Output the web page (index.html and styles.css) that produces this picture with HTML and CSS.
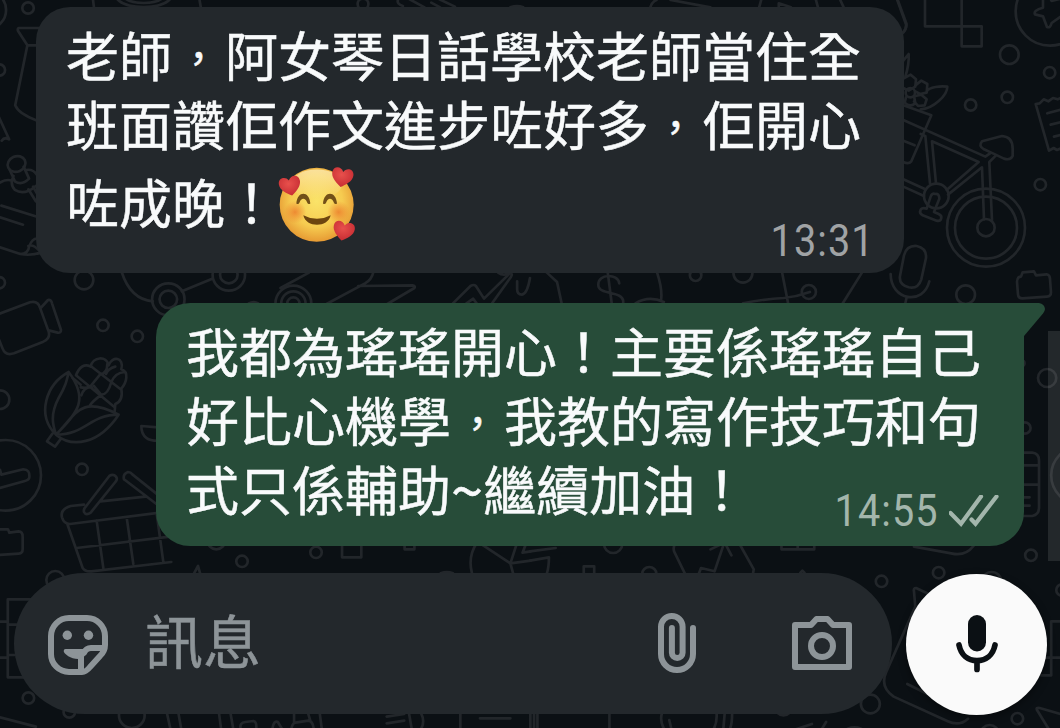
FILE: index.html
```
<!DOCTYPE html>
<html lang="zh-HK">
<head>
  <meta charset="UTF-8" />
  <meta name="viewport" content="width=device-width, initial-scale=1" />
  <title>訊息</title>
  <link rel="stylesheet" href="styles.css">
</head>
<body>
  <svg class="wallpaper" viewBox="0 0 1060 728" aria-hidden="true">
    <!-- top left: vase, pushpin, book -->
    <g transform="scale(.338 .3333)">
      <circle cx="83" cy="24" r="17"/>
      <circle cx="-40" cy="30" r="58"/>
      <path d="M118 84H56q-6 2-2 10l27 42h30M81 136L45 316q10 26 65 46"/>
      <circle cx="-2" cy="210" r="17"/>
      <path d="M-4 350L27 418q-14-8-22 4"/>
      <ellipse cx="49" cy="492" rx="27" ry="23" transform="rotate(-25 49 492)"/>
      <path d="M28 508l16 36q20 14 42-8l-16-36M40 528q-12 24 4 42 28 18 62-12M77 510q20-4 32 14M84 568l22 36M98 560l12 22M0 548q20-12 34-6M4 617l108 34M0 652l68 22M0 742l60 20q24 0 26-22 10-28 28-24M60 762q30 6 62-4M84 738q14-6 30 12"/>
      <path d="M275-2l3 24M590-2l4 24M345-5q20 26 80 26t80-26M370-5q18 14 55 14t55-14"/>
      <circle cx="1074" cy="12" r="16"/>
      <path d="M1178-2q-6 14 14 20M1212-2l44 24M1276 8l26 14M1300-2l46 22M1510 22q20-8 38 0"/>
    </g>
    <!-- top edge and strip under the first bubble -->
    <g transform="translate(530 0) scale(.338 .3333)">
      <path d="M356 22q4-16 18-22M416 0l118 22M678 22l6-22M846 0l6 22M736 10v12M736 10l36 12M918 0l10 22M1088 0l26 72q0 14-10 26"/>
      <path d="M50 818l30 28 14 66M376 818q16 50 12 80M264 850c-4-30-62-30-62 4 0 34 74 16 74 52q0 14-14 16M230 818l12 94M312 910q40-24 84-4M630 910q70-14 120-16 40-4 78-18M746 818l18 94M982 818l-58 94"/>
      <circle cx="490" cy="826" r="17"/>
      <circle cx="630" cy="820" r="28"/>
      <circle cx="825" cy="876" r="21"/>
    </g>
    <!-- right side: flower basket bike, badge, receipt, microphone -->
    <g transform="translate(890 0) scale(.3333)">
      <path d="M20-5l28 78q2 16-10 26M105-5v84h170v60h-60V-5"/>
      <circle cx="480" cy="34" r="103"/>
      <path d="M515-5l-30 8-6-12h-20v32q-30 8-24 20l24 6 12 32q10 4 14-12l25-18"/>
      <circle cx="358" cy="164" r="28"/>
      <circle cx="479" cy="218" r="17"/>
      <circle cx="352" cy="292" r="17"/>
      <circle cx="242" cy="315" r="17"/>
      <circle cx="451" cy="554" r="17"/>
      <path d="M515 292l-12 6-14-4-14 10-14-6-12 12-12 2 40 140 14-8 10 6 14-6M472 340l43-12M482 374l33-8M492 410l23-6"/>
      <path d="M40 182l16-20q2 30-10 68M40 236l22-12 16 14-2 22-20 12-16-8M76 256l18-14 18 10-2 26-20 4-14-8M48 292l-4 16q16 16 32 2l-4-22M76 288l18-4 16 14-6 18-20 2-12-14M110 274c8-14 42-16 62-14 0 26-42 66-80 68"/>
      <circle cx="61" cy="278" r="14"/>
      <path d="M40 316l84 30-60 138q-8 10-24 2M40 360l246 110 14-10M40 422l34 14M126 424l140 62-96 84M126 424l12 126M106 408l14 142M92 402l10 4M174 584l102-82 6 156M298 486l8 174M298 486l20-20M40 538l66 30M40 560l62 28"/>
      <path d="M276 424l60-16q32 2 32 38v22q-6 14-26 8l-38-18-22-10q-18-10-6-24z"/>
      <circle cx="139" cy="588" r="37"/>
      <path d="M122 590l-12 36c-20-6-26 12-12 20l42 16c14 4 20-14 6-20l-14-6 16-40q0-16-12-14-10-4-14 8z"/>
      <circle cx="288" cy="683" r="117"/>
      <circle cx="288" cy="683" r="93"/>
      <circle cx="288" cy="683" r="26"/>
      <path d="M42 766q8-30 38-28 30 6 28 36l-14 64q-10 30-38 24-30-8-26-34zM2 822c0 80 98 96 116 22M50 892l-4 18"/>
      <circle cx="227" cy="884" r="28"/>
      <path d="M398 817l34-3 6 12 32-3q10 2 10 14l3 40q0 12-12 13l-74 5q-12 0-13-12l-3-38q0-14 12-15z"/>
    </g>
    <!-- left side: camera, corn, shopping basket -->
    <g transform="translate(0 280) scale(.3333)">
      <circle cx="-2" cy="8" r="17"/>
      <circle cx="252" cy="0" r="28"/>
      <path d="M-4 102l94-35q24-6 30 16l26 72q6 20-16 30L42 220q-26 8-34-14l-12-30M122 84l22-24q10-2 12 10l27 80q0 10-10 8l-24-6"/>
      <circle cx="309" cy="136" r="17"/>
      <circle cx="412" cy="169" r="17"/>
      <circle cx="0" cy="359" r="28"/>
      <path d="M168 464c-60-60-30-150 38-188 60 80 30 120-38 188-10-30-18-60 8-110 20-34 24-50 30-78M168 464c60-60 70-120 188-60-60 90-140 100-188 60 90 0 100-60 188-60M158 460l-17 24 24 16 18-24"/>
      <path d="M228 286c10-26 26-36 44-26 6-30 48-34 54-4 10-30 48-24 38 12 24 8 16 40 0 58 4 24-2 40-18 46l-2 22M228 286l116 96M272 258l90 70M218 294l24 20M242 322q20 4 30-4l28-34q22-4 22-32M244 346q10-28 32-24M270 376q8-12 34-32 20 0 30-38 12-28 40-30M300 340l-18-22M318 282q6-16 28-22"/>
      <circle cx="17" cy="586" r="106"/>
      <path d="M0 570l4 14 66-16q20 0 18 24 0 8-16 12L0 624M-4 748h28l4 10 28-4q12 0 12 16v38q0 12-12 13l-60 4"/>
      <circle cx="246" cy="568" r="17"/>
      <path d="M328 588q12-8 20 2 6 8-2 16l-74 92q-14 10-20-2-2-8 4-14zM372 598q-4-16 12-22 8 0 14 8l90 72M372 598l110 84M474 442l-50-4c0 34 22 46 54 44M252 674l-40 4q-32 10-26 34 6 20 24 20l270-34M302 664l134-14M202 732l46 132q8 12 26 10l240-28M230 804l280-34M290 722l20 142M380 712l20 140M470 700l20 146"/>
      <circle cx="166" cy="900" r="27"/>
    </g>
    <!-- between the bubbles -->
    <g transform="translate(0 260) scale(.338 .3333)">
      <path d="M360 36q26 82 92 88M538 94l90-38M914 38l-84 46M1104 38q-4 20-24 32l-114 62M1060 78l160-2q10 2 6 8l-80 48M1340 130l52-52q10-6 16 0l24 38 76-76q10 0 4 10l-56 80M1380 130l20-14 10 14M1530 64v24q0 16 14 16 16-2 24-50"/>
      <circle cx="498" cy="118" r="48"/>
      <circle cx="498" cy="118" r="26"/>
      <circle cx="677" cy="44" r="48"/>
      <circle cx="677" cy="44" r="26"/>
      <circle cx="868" cy="130" r="53"/>
      <circle cx="868" cy="130" r="36"/>
      <circle cx="868" cy="130" r="18"/>
      <path d="M736 130q14-8 28 0M1474 38q16 12 36 0"/>
    </g>
    <!-- right of the second bubble -->
    <g transform="translate(530 290) scale(.338 .3333)">
      <circle cx="1530" cy="264" r="27"/>
      <circle cx="1464" cy="414" r="17"/>
      <path d="M1440 488h46q20 2 20 24v140q0 22-20 26h-46M1460 526h46M1460 584h46M1460 622h18M1460 647h18"/>
      <circle cx="1630" cy="556" r="88"/>
      <circle cx="1455" cy="220" r="8"/>
      <circle cx="1482" cy="796" r="17"/>
    </g>
    <!-- around the input bar, left half -->
    <g transform="translate(0 540) scale(.338 .3333)">
      <circle cx="640" cy="2" r="26"/>
      <circle cx="716" cy="64" r="17"/>
      <circle cx="935" cy="37" r="17"/>
      <path d="M574 100l12-22 6 22M1012 10v42h57V10M1197 10v18h29V10M1410 10q-26 40-14 88M1426 14l84 56 60-8M1510 70l18-56M1510 70l8 30M1556 12l-10 26 24-4M1304 100q18-8 36 0M100 178H23v234h60M0 245h22M23 254h34M0 353h22M23 345h20M0 532l106 28"/>
      <circle cx="84" cy="474" r="17"/>
      <circle cx="205" cy="516" r="17"/>
      <circle cx="390" cy="526" r="38"/>
      <path d="M494 520l10 46M528 520l8 46M648 520l6 46M682 520l8 46M712 566q-4-18 14-20l24-3q10 2 8 23M806 566q4-26 16-20l12 20M862 566q4-18 12-18l38-6q14 2 16 24M870 546v-24M912 522l6 20M946 520l6 46M1144 530l52-8M1144 550l52-8M1210 520l8 46M1246 520q12 24 0 46M1362 520v46M1420 535h90"/>
    </g>
    <!-- around the input bar, right half -->
    <g transform="translate(530 540) scale(.338 .3333)">
      <path d="M0 34l76-10M0 62l56-10q0 30-6 48M159 100V79h31v21M428 14q-6 12 0 24l30 62M428 14l6-4M620 12l42 76-2 12M534 28l42-20 20 38M572 16l-26 78-40-10-6 16M744 14v14h97V14M792 14v12M800 98l6-6 6 6M1136 20l110 20q42 10 66-22"/>
      <circle cx="246" cy="12" r="27"/>
      <circle cx="353" cy="102" r="21"/>
      <circle cx="1040" cy="124" r="17"/>
      <circle cx="1209" cy="98" r="17"/>
      <circle cx="1366" cy="124" r="28"/>
      <circle cx="1574" cy="150" r="17"/>
      <path d="M1180 162l-38-18q-8 0-6 10l4 46-86 196q-20 44 22 74l160 74q34 16 60-8M1116 432l60 30M1570 244h-28v162h-30M1520 353h50M1500 510q-4-8 8-6l62 18M1500 510l34 56M1 520v46M12 520v46M22 520v46M235 520v46M390 520q-6 24 6 46M412 540l6 26M552 520q2 26-8 46M576 520l-4 46M598 520q0 30-6 46M768 574l66-22M864 566l12-20M940 566q20-8 40 0"/>
      <circle cx="750" cy="502" r="24"/>
      <circle cx="1007" cy="492" r="28"/>
      <circle cx="1442" cy="536" r="17"/>
      <circle cx="1360" cy="582" r="27"/>
    </g>
  </svg>

  <main class="chat">
    <article class="bubble received">
      <p>老師<span class="comma">，</span>阿女琴日話學校老師當住全<br>班面讚佢作文進步咗好多<span class="comma">，</span>佢開心<br>咗成晚！<svg class="emoji" viewBox="38 34 234 230" role="img" aria-label="🥰">
        <defs>
          <radialGradient id="face" cx=".5" cy=".45" r=".58">
            <stop offset="0" stop-color="#fae369"/>
            <stop offset=".6" stop-color="#f6cb50"/>
            <stop offset="1" stop-color="#e4932f"/>
          </radialGradient>
          <linearGradient id="shine" x1="0" y1="0" x2="0" y2="1">
            <stop offset="0" stop-color="#fff3c0" stop-opacity=".7"/>
            <stop offset="1" stop-color="#fff3c0" stop-opacity="0"/>
          </linearGradient>
          <radialGradient id="cheek">
            <stop offset="0" stop-color="#ec7f2d" stop-opacity=".85"/>
            <stop offset="1" stop-color="#ec7f2d" stop-opacity="0"/>
          </radialGradient>
          <radialGradient id="red" cx=".45" cy=".35" r=".7">
            <stop offset="0" stop-color="#e8504c"/>
            <stop offset="1" stop-color="#c42a31"/>
          </radialGradient>
          <path id="heart" d="M0 31C-14 21-33 8-32-10C-31-29-8-31 0-15C8-31 31-29 32-10C33 8 14 21 0 31Z"/>
        </defs>
        <circle cx="154" cy="150" r="111" fill="url(#face)"/>
        <ellipse cx="154" cy="88" rx="76" ry="44" fill="url(#shine)"/>
        <circle cx="89" cy="172" r="34" fill="url(#cheek)"/>
        <circle cx="220" cy="172" r="34" fill="url(#cheek)"/>
        <path d="M93 146C96 107 132 107 135 146Q129 151 125 142C121 128 107 128 103 142Q99 151 93 146ZM173 146C176 107 212 107 215 146Q209 151 205 142C201 128 187 128 183 142Q179 151 173 146Z" fill="#725018"/>
        <path d="M114 181Q155 203 196 181C188 219 122 219 114 181Z" fill="#6d450f"/>
        <use href="#heart" transform="translate(74 92) rotate(-12)" fill="url(#red)"/>
        <use href="#heart" transform="translate(231 66) rotate(10)" fill="url(#red)"/>
        <use href="#heart" transform="translate(235 227) rotate(12)" fill="url(#red)"/>
      </svg></p>
      <div class="meta"><time>13:31</time></div>
    </article>

    <article class="bubble sent">
      <svg class="tail" viewBox="0 0 22 34"><path d="M0 0H16Q21.500 1 22 6Q22 8 20 10.500L1 33H0Z"/></svg>
      <p>我都為瑤瑤開心！主要係瑤瑤自己<br>好比心機學<span class="comma">，</span>我教的寫作技巧和句<br>式只係輔助<span class="tilde">~</span>繼續加油！</p>
      <div class="meta">
        <time>14:55</time>
        <svg class="ticks" viewBox="0 0 50 32"><path d="M1.500 18L12 28.700L32 1.500M22.500 24.500L26.500 28.700L47.500 1.500"/></svg>
      </div>
    </article>
  </main>

  <div class="scrollbar"></div>

  <footer class="composer">
    <div class="field">
      <svg class="icon sticker" viewBox="0 0 60 60">
        <path d="M34 57H21A18 18 0 0 1 3 39V21A18 18 0 0 1 21 3H39A18 18 0 0 1 57 21V30Q57 36 52 41L42 52Q38 57 34 57ZM33 56V42Q33 39 36 38Q38 33 43 33H56"/>
        <path class="solid" d="M17.500 34H38L32 44H30C23 44 15.700 39 15.700 36Q15.700 34 17.500 34Z"/>
        <circle class="solid" cx="19.300" cy="20.300" r="4.700"/>
        <circle class="solid" cx="40.500" cy="20.300" r="4.700"/>
      </svg>
      <span class="placeholder">訊息</span>
      <svg class="icon clip" viewBox="0 0 38 60"><path d="M35 15V41A16 16 0 0 1 3 41V13.800A10.800 10.800 0 0 1 24.600 13.800V39.700A5.350 5.350 0 0 1 13.900 39.700V15"/></svg>
      <svg class="icon camera" viewBox="0 0 60 54"><path d="M3 9H19L24.500 3H35.500L41 9H57V51H3Z"/><circle cx="30" cy="30" r="11"/></svg>
    </div>
    <button class="mic" aria-label="錄音">
      <svg viewBox="0 0 42 58"><rect x="12" width="18" height="36.500" rx="9"/><path d="M3 30C5 40 12 45.500 21 45.500S37 40 39 30M21 46V54.500"/></svg>
    </button>
  </footer>
</body>
</html>
```
FILE: styles.css
```
* { box-sizing: border-box; }
body {
  width: 1060px;
  height: 728px;
  margin: 0;
  position: relative;
  overflow: hidden;
  display: flex;
  flex-direction: column;
  justify-content: space-between;
  background-color: #0b1014;
  color: #f8fafb;
  font-family: Roboto, "Noto Sans CJK TC", sans-serif;
}
.wallpaper {
  position: absolute;
  inset: 0;
  z-index: -1;
  fill: none;
  stroke: #22262a;
  stroke-width: 8;
  stroke-linecap: round;
  stroke-linejoin: round;
}

.chat {
  display: flex;
  flex-direction: column;
  gap: 30px;
  padding: 7px 36px 0;
}
.bubble {
  width: 868px;
  border-radius: 34px;
  padding: 13px 29px 0 30px;
  display: flex;
  flex-direction: column;
}
.bubble p {
  margin: 0;
  font-family: "Noto Sans CJK TC", sans-serif;
  font-size: 53px;
  line-height: 69px;
  white-space: nowrap;
  -webkit-text-stroke: 0.5px #f8fafb;
}
.comma {
  padding: 0 6.5px;
  font-size: 40px;
  line-height: 0;
  vertical-align: 4px;
}
.tilde {
  font-size: 58px;
  line-height: 0;
  vertical-align: -2px;
}
.received {
  height: 266px;
  background: #23282c;
}
.sent {
  position: relative;
  align-self: flex-end;
  height: 243px;
  background: #274c39;
  border-top-right-radius: 0;
}
.tail {
  position: absolute;
  left: 867px;
  top: 0;
  width: 22px;
  height: 34px;
  fill: #274c39;
}
.emoji {
  width: 78px;
  height: 77px;
  margin-top: 8px;
  vertical-align: -19px;
}

/* sits beside the last line of text */
.meta {
  display: flex;
  align-items: center;
  align-self: flex-end;
  gap: 10px;
  margin-top: -27px;
  color: #a0a3a5;
  font-size: 44px;
  line-height: 50px;
}
.meta time {
  letter-spacing: 1.2px;
  transform: scaleX(0.9);
  transform-origin: right;
}
.sent .meta {
  margin-top: -37px;
  margin-right: -4px;
  color: #a3b6ac;
}
.ticks {
  width: 50px;
  height: 32px;
  fill: none;
  stroke: #a3b6ac;
  stroke-width: 4.2;
  stroke-linecap: round;
}

.scrollbar {
  position: absolute;
  right: 0;
  top: 331px;
  width: 12px;
  height: 230px;
  background: rgba(255, 255, 255, 0.1);
}

.composer {
  display: flex;
  align-items: flex-end;
  gap: 14px;
  padding: 0 13px 13px 14px;
}
.field {
  flex: 1;
  height: 141px;
  margin-bottom: 1px;
  border-radius: 71px;
  padding: 0 40px 0 34px;
  display: flex;
  align-items: center;
  background: #23282c;
}
.placeholder {
  flex: 1;
  margin: -10px 0 0 37px;
  color: #8d9498;
  font-family: "Noto Sans CJK TC", sans-serif;
  font-size: 58px;
  line-height: 80px;
  -webkit-text-stroke: 0.5px #8d9498;
}
.icon {
  fill: none;
  stroke: #8d9498;
  stroke-width: 6;
  stroke-linecap: round;
  stroke-linejoin: round;
}
.icon .solid {
  fill: #8d9498;
  stroke: none;
}
.sticker { width: 60px; height: 60px; margin-top: 3px; }
.clip { width: 38px; height: 60px; margin-bottom: 1px; }
.camera { width: 60px; height: 54px; margin-left: 96px; margin-bottom: 1px; }
.mic {
  width: 141px;
  height: 141px;
  padding: 0 0 2px;
  border: none;
  border-radius: 50%;
  display: flex;
  align-items: center;
  justify-content: center;
  background: #fafafa;
  box-shadow: 0 3px 8px rgba(0, 0, 0, 0.4);
}
.mic svg {
  width: 42px;
  height: 58px;
  fill: #0b1014;
}
.mic path {
  fill: none;
  stroke: #0b1014;
  stroke-width: 5.7;
  stroke-linecap: round;
}
```
